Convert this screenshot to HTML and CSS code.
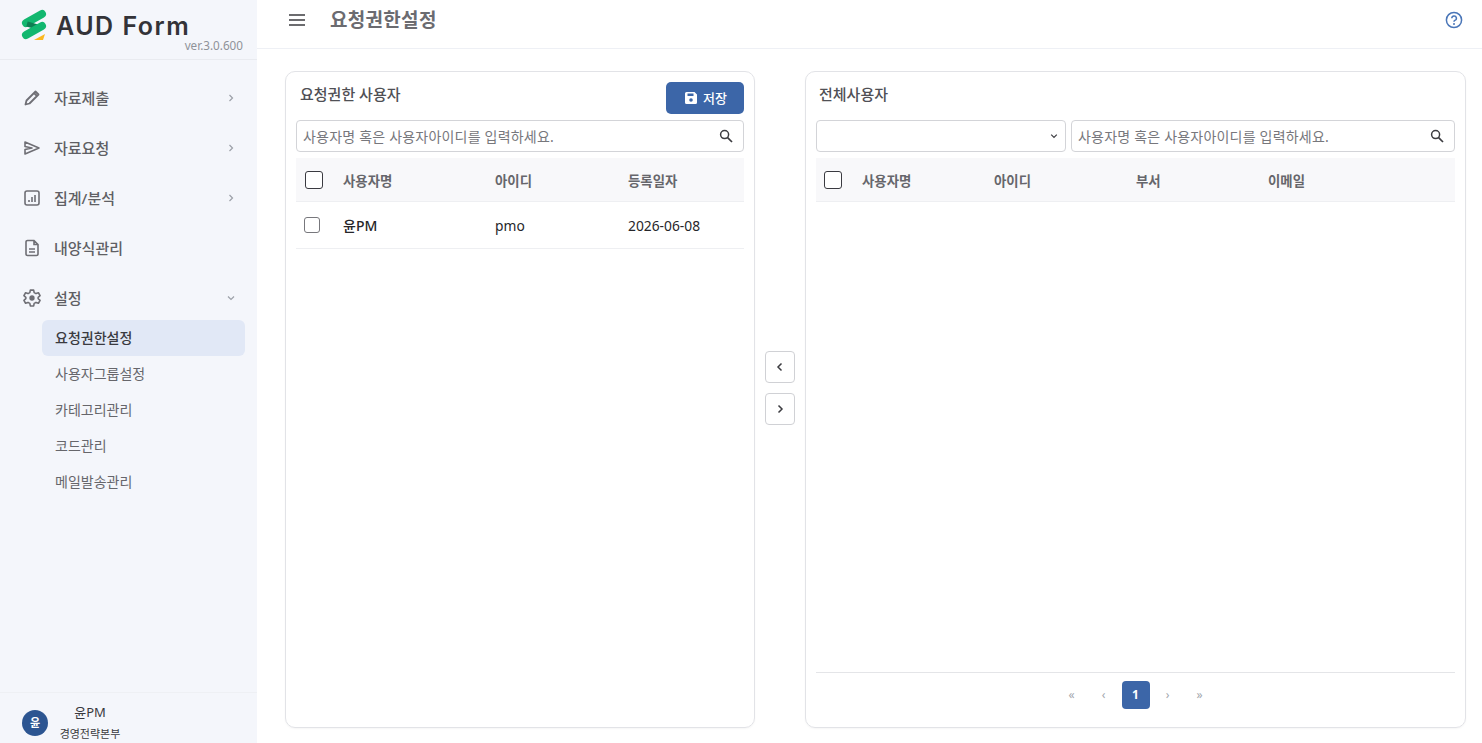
FILE: index.html
```html
<!DOCTYPE html>
<html lang="ko">
  <head>
    <meta charset="UTF-8" />
    <title>요청권한설정</title>
    <link rel="stylesheet" href="styles.css">
  </head>

  <body>
    <aside class="sidebar">
      <div class="logo-area">
        <div class="logo">
          <svg class="logo-mark" width="28" height="34" viewBox="0 0 28 34">
            <path d="M5 14 L21 5" stroke="#12b76f" stroke-width="8" stroke-linecap="round" />
            <path d="M6 15 L20 19" stroke="#0e7f52" stroke-width="5" />
            <path d="M5 26 L21 17" stroke="#12b76f" stroke-width="8" stroke-linecap="round" />
            <path d="M13 31 L24 25 L22 31 Z" fill="#fbb81f" />
          </svg>
          <span class="logo-text">AUD Form</span>
        </div>
        <div class="version">ver.3.0.600</div>
      </div>

      <nav class="menu">
        <div class="menu-item">
          <svg class="menu-icon" viewBox="0 0 20 20" width="20" height="20"><path d="M3.5 16.5 L4.5 12.5 L13.5 3.5 L16.5 6.5 L7.5 15.5 Z M12 5 L15 8" fill="none" stroke="#6f6f75" stroke-width="1.8" stroke-linejoin="round" /></svg>
          <span class="menu-label">자료제출</span>
          <svg class="chevron" viewBox="0 0 10 10" width="10" height="10"><path d="M3.5 2 L6.5 5 L3.5 8" fill="none" stroke="#9ca0a8" stroke-width="1.2" /></svg>
        </div>
        <div class="menu-item">
          <svg class="menu-icon" viewBox="0 0 20 20" width="20" height="20"><path d="M3 4 L17 10 L3 16 L3 11.5 L10 10 L3 8.5 Z" fill="none" stroke="#6f6f75" stroke-width="1.6" stroke-linejoin="round" /></svg>
          <span class="menu-label">자료요청</span>
          <svg class="chevron" viewBox="0 0 10 10" width="10" height="10"><path d="M3.5 2 L6.5 5 L3.5 8" fill="none" stroke="#9ca0a8" stroke-width="1.2" /></svg>
        </div>
        <div class="menu-item">
          <svg class="menu-icon" viewBox="0 0 20 20" width="20" height="20"><rect x="3" y="3" width="14" height="14" rx="2" fill="none" stroke="#6f6f75" stroke-width="1.6" /><path d="M7 14 V12 M10 14 V9 M13 14 V7" stroke="#6f6f75" stroke-width="1.6" /></svg>
          <span class="menu-label">집계/분석</span>
          <svg class="chevron" viewBox="0 0 10 10" width="10" height="10"><path d="M3.5 2 L6.5 5 L3.5 8" fill="none" stroke="#9ca0a8" stroke-width="1.2" /></svg>
        </div>
        <div class="menu-item">
          <svg class="menu-icon" viewBox="0 0 20 20" width="20" height="20"><path d="M4 4 A1.5 1.5 0 0 1 5.5 2.5 H12 L16 6.5 V16 A1.5 1.5 0 0 1 14.5 17.5 H5.5 A1.5 1.5 0 0 1 4 16 Z M12 2.5 V6.5 H16" fill="none" stroke="#6f6f75" stroke-width="1.6" /><path d="M7 11 H13 M7 14 H13" stroke="#6f6f75" stroke-width="1.5" /></svg>
          <span class="menu-label">내양식관리</span>
        </div>
        <div class="menu-item">
          <svg class="menu-icon" viewBox="0 0 24 24" width="20" height="20"><circle cx="12" cy="12" r="3.2" fill="#6f6f75" /><path d="M10 2.5 H14 L14.6 5.5 L16.8 6.7 L19.7 5.7 L21.7 9.2 L19.4 11.2 V12.8 L21.7 14.8 L19.7 18.3 L16.8 17.3 L14.6 18.5 L14 21.5 H10 L9.4 18.5 L7.2 17.3 L4.3 18.3 L2.3 14.8 L4.6 12.8 V11.2 L2.3 9.2 L4.3 5.7 L7.2 6.7 L9.4 5.5 Z" fill="none" stroke="#6f6f75" stroke-width="1.9" stroke-linejoin="round" /></svg>
          <span class="menu-label">설정</span>
          <svg class="chevron" viewBox="0 0 10 10" width="10" height="10"><path d="M2 3.5 L5 6.5 L8 3.5" fill="none" stroke="#9ca0a8" stroke-width="1.2" /></svg>
        </div>
        <div class="submenu">
          <div class="submenu-item active">요청권한설정</div>
          <div class="submenu-item">사용자그룹설정</div>
          <div class="submenu-item">카테고리관리</div>
          <div class="submenu-item">코드관리</div>
          <div class="submenu-item">메일발송관리</div>
        </div>
      </nav>

      <div class="profile">
        <div class="avatar">윤</div>
        <div class="profile-text">
          <div class="profile-name">윤PM</div>
          <div class="profile-dept">경영전략본부</div>
        </div>
      </div>
    </aside>

    <div class="content">
      <header class="topbar">
        <svg class="hamburger" viewBox="0 0 16 12" width="16" height="12"><path d="M0 1 H16 M0 6 H16 M0 11 H16" stroke="#3c3c40" stroke-width="1.6" /></svg>
        <h1 class="page-title">요청권한설정</h1>
        <svg class="help" viewBox="0 0 18 18" width="18" height="18"><circle cx="9" cy="9" r="7.6" fill="none" stroke="#4a76b8" stroke-width="1.5" /><path d="M6.8 7.2 A2.3 2.3 0 1 1 9.8 9.4 C9.2 9.7 9 10 9 10.8" fill="none" stroke="#4a76b8" stroke-width="1.5" /><circle cx="9" cy="13" r="1" fill="#4a76b8" /></svg>
      </header>

      <main class="panels">
        <section class="card">
          <div class="card-head">
            <h2 class="card-title">요청권한 사용자</h2>
            <button class="save-btn">
              <svg viewBox="0 0 14 14" width="14" height="14"><path d="M1 2.5 A1.5 1.5 0 0 1 2.5 1 H10.5 L13 3.5 V11.5 A1.5 1.5 0 0 1 11.5 13 H2.5 A1.5 1.5 0 0 1 1 11.5 Z" fill="#fff" /><rect x="3.5" y="2.5" width="6" height="2.5" fill="#3c66a8" /><circle cx="7" cy="9" r="1.8" fill="#3c66a8" /></svg>
              <span>저장</span>
            </button>
          </div>
          <div class="search-row">
            <div class="search-box">
              <span class="placeholder">사용자명 혹은 사용자아이디를 입력하세요.</span>
              <svg class="search-icon" viewBox="0 0 14 14" width="14" height="14"><circle cx="5.6" cy="5.6" r="4" fill="none" stroke="#3c3c40" stroke-width="1.5" /><path d="M8.6 8.6 L13 13" stroke="#3c3c40" stroke-width="1.7" /></svg>
            </div>
          </div>
          <div class="grid-row grid-head cols-left">
            <span class="check check-head"></span>
            <span>사용자명</span>
            <span>아이디</span>
            <span>등록일자</span>
          </div>
          <div class="grid-row grid-body cols-left">
            <span class="check"></span>
            <span class="user-name">윤PM</span>
            <span>pmo</span>
            <span>2026-06-08</span>
          </div>
        </section>

        <div class="move-btns">
          <button class="move-btn"><svg viewBox="0 0 10 10" width="10" height="10"><path d="M6.5 1.5 L3 5 L6.5 8.5" fill="none" stroke="#3c3c40" stroke-width="1.5" /></svg></button>
          <button class="move-btn"><svg viewBox="0 0 10 10" width="10" height="10"><path d="M3.5 1.5 L7 5 L3.5 8.5" fill="none" stroke="#3c3c40" stroke-width="1.5" /></svg></button>
        </div>

        <section class="card card-wide">
          <div class="card-head">
            <h2 class="card-title">전체사용자</h2>
          </div>
          <div class="search-row">
            <div class="select-box">
              <svg viewBox="0 0 8 8" width="8" height="8"><path d="M1.2 2.6 L4 5.4 L6.8 2.6" fill="none" stroke="#3c3c40" stroke-width="1.2" /></svg>
            </div>
            <div class="search-box">
              <span class="placeholder">사용자명 혹은 사용자아이디를 입력하세요.</span>
              <svg class="search-icon" viewBox="0 0 14 14" width="14" height="14"><circle cx="5.6" cy="5.6" r="4" fill="none" stroke="#3c3c40" stroke-width="1.5" /><path d="M8.6 8.6 L13 13" stroke="#3c3c40" stroke-width="1.7" /></svg>
            </div>
          </div>
          <div class="grid-row grid-head cols-right">
            <span class="check check-head"></span>
            <span>사용자명</span>
            <span>아이디</span>
            <span>부서</span>
            <span>이메일</span>
          </div>
          <div class="grid-empty"></div>
          <div class="pager">
            <span class="page-link">«</span>
            <span class="page-link">‹</span>
            <span class="page-num">1</span>
            <span class="page-link">›</span>
            <span class="page-link">»</span>
          </div>
        </section>
      </main>
    </div>
  </body>
</html>
```

FILE: styles.css
```css
* {
  box-sizing: border-box;
}

html,
body {
  height: 743px;
}

body {
  margin: 0;
  display: flex;
  overflow: hidden;
  background: #fff;
  color: #26262a;
  font-family: "Noto Sans", "Noto Sans CJK KR", sans-serif;
  font-size: 14px;
}

/* Sidebar */
.sidebar {
  width: 257px;
  flex-shrink: 0;
  display: flex;
  flex-direction: column;
  background: #f4f6fb;
}

.logo-area {
  height: 60px;
  padding: 9px 14px 0 21px;
  border-bottom: 1px solid #e9ebf0;
}

.logo {
  display: flex;
  align-items: center;
  gap: 7px;
  height: 34px;
}

.logo-text {
  font-family: Inter, sans-serif;
  font-size: 25px;
  font-weight: 600;
  letter-spacing: 1.5px;
  line-height: 34px;
  color: #333338;
}

.version {
  margin-top: -5px;
  text-align: right;
  font-size: 11.7px;
  line-height: 14px;
  color: #8f9299;
}

.menu {
  flex: 1;
  padding-top: 13px;
}

.menu-item {
  height: 50px;
  display: flex;
  align-items: center;
  padding: 0 21px 0 22px;
}

.menu-icon {
  flex-shrink: 0;
}

.menu-label {
  flex: 1;
  margin-left: 12px;
  margin-top: -2px;
  font-size: 15px;
  font-weight: 500;
  color: #5f5f64;
}

.submenu {
  padding-left: 42px;
  margin-top: -3px;
}

.submenu-item {
  width: 203px;
  height: 36px;
  line-height: 35px;
  padding-left: 13px;
  font-size: 14px;
  color: #66666b;
  border-radius: 6px;
}

.submenu-item.active {
  background: #e1e8f6;
  color: #3a3a40;
  font-weight: 500;
}

.profile {
  height: 51px;
  display: flex;
  align-items: flex-start;
  padding: 17px 0 0 22px;
  border-top: 1px solid #eef0f4;
}

.avatar {
  width: 26px;
  height: 26px;
  border-radius: 50%;
  flex-shrink: 0;
  background: #2c5591;
  color: #fff;
  font-size: 11px;
  font-weight: 700;
  line-height: 26px;
  text-align: center;
}

.profile-text {
  width: 84px;
  margin-top: -8px;
  text-align: center;
}

.profile-name {
  font-size: 13px;
  line-height: 20px;
  color: #3a3a40;
}

.profile-dept {
  font-size: 11px;
  line-height: 21px;
  padding-top: 1px;
  color: #3a3a40;
}

/* Main area */
.content {
  flex: 1;
  min-width: 0;
  display: flex;
  flex-direction: column;
}

.topbar {
  height: 49px;
  flex-shrink: 0;
  display: flex;
  align-items: center;
  padding: 0 19px 8px 32px;
  border-bottom: 1px solid #eef0f5;
}

.page-title {
  flex: 1;
  margin: -2px 0 0 25px;
  font-size: 19px;
  letter-spacing: 0.3px;
  font-weight: 700;
  color: #6b6b70;
}

.panels {
  flex: 1;
  display: flex;
  padding: 22px 16px 15px 28px;
}

.card {
  width: 470px;
  flex-shrink: 0;
  display: flex;
  flex-direction: column;
  padding: 10px;
  border: 1px solid #e2e3e7;
  border-radius: 10px;
  box-shadow: 0 1px 2px rgba(0, 0, 0, 0.04);
}

.card-wide {
  width: auto;
  flex: 1;
}

.card-head {
  height: 32px;
  display: flex;
  align-items: flex-start;
  justify-content: space-between;
  margin-bottom: 6px;
}

.card-title {
  margin: 1px 0 0 3px;
  font-size: 15px;
  line-height: 22px;
  font-weight: 500;
  color: #505055;
}

.card:first-child .card-title {
  margin-left: 4px;
}

.save-btn {
  width: 78px;
  height: 32px;
  display: flex;
  align-items: center;
  justify-content: center;
  gap: 5px;
  padding: 0 0 0 1px;
  border: 0;
  border-radius: 5px;
  background: #3c66a8;
  color: #fff;
  font-family: inherit;
  font-size: 13px;
  font-weight: 500;
}

.save-btn span {
  margin-top: -2px;
}

.search-row {
  display: flex;
  gap: 5px;
  margin-bottom: 6px;
}

.search-box,
.select-box {
  height: 32px;
  display: flex;
  align-items: center;
  border: 1px solid #d3d4d8;
  border-radius: 4px;
}

.search-box {
  flex: 1;
  justify-content: space-between;
  padding: 0 10px 0 6px;
}

.select-box {
  width: 250px;
  flex-shrink: 0;
  justify-content: flex-end;
  padding-right: 7px;
}

.placeholder {
  margin-top: -1px;
  font-size: 14px;
  letter-spacing: 0.2px;
  color: #77777c;
}

.grid-row {
  display: grid;
  align-items: center;
  border-bottom: 1px solid #eeeff2;
}

.cols-left {
  grid-template-columns: 47px 152px 133px 1fr;
}

.cols-right {
  grid-template-columns: 46px 132px 142px 132px 1fr;
}

.grid-head {
  height: 44px;
  background: #f8f8fa;
  font-size: 13.4px;
  font-weight: 700;
  color: #66666b;
}

.grid-body {
  height: 47px;
  font-size: 13.8px;
  color: #26262a;
}

.user-name {
  font-size: 14px;
  font-weight: 500;
}

.check {
  display: block;
  width: 16px;
  height: 16px;
  margin-left: 8px;
  border: 1px solid #77777c;
  border-radius: 3px;
  background: #fff;
}

.check-head {
  width: 18px;
  height: 18px;
  margin-left: 9px;
  border-color: #3a3a40;
}

.cols-right .check-head {
  margin-left: 8px;
}

.grid-empty {
  flex: 1;
}

.move-btns {
  width: 50px;
  flex-shrink: 0;
  display: flex;
  flex-direction: column;
  align-items: center;
  justify-content: center;
  gap: 10px;
  padding-bottom: 23px;
}

.move-btn {
  width: 30px;
  height: 32px;
  display: flex;
  align-items: center;
  justify-content: center;
  padding: 0;
  border: 1px solid #d0d1d5;
  border-radius: 4px;
  background: #fff;
}

.pager {
  height: 47px;
  margin-bottom: -2px;
  display: flex;
  align-items: flex-start;
  justify-content: center;
  padding: 8px 0 0 0;
  border-top: 1px solid #e4e5e8;
}

.page-link {
  width: 32px;
  height: 28px;
  line-height: 28px;
  text-align: center;
  font-size: 12px;
  color: #a3a7ae;
}

.page-num {
  width: 28px;
  height: 28px;
  margin: 0 2px;
  line-height: 28px;
  text-align: center;
  font-size: 12px;
  font-weight: 700;
  color: #fff;
  background: #3c66a8;
  border-radius: 4px;
}
```
